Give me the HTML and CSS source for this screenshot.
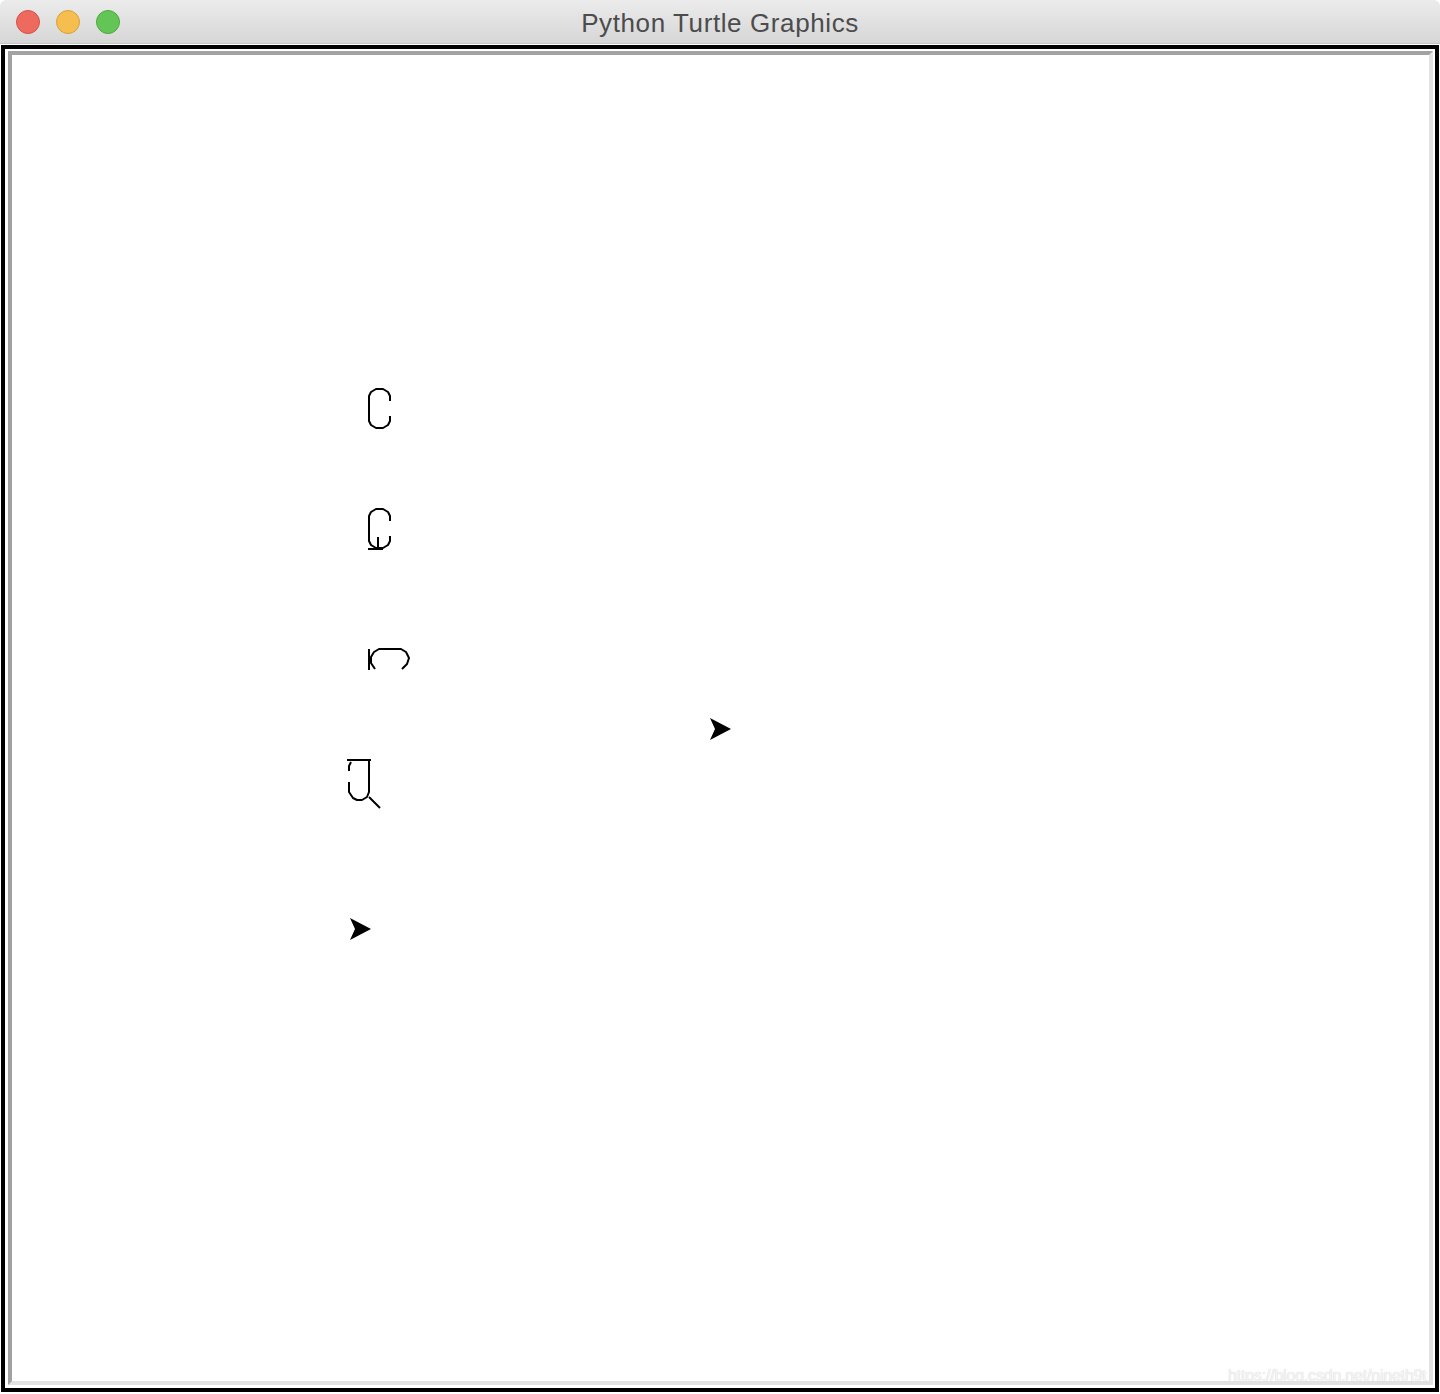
FILE: index.html
```html
<!DOCTYPE html>
<html>
<head>
<meta charset="utf-8">
<title>Python Turtle Graphics</title>
<link rel="stylesheet" href="styles.css">
</head>
<body>
<div class="window">
  <div class="titlebar">
    <div class="lights">
      <span class="light red"></span>
      <span class="light yellow"></span>
      <span class="light green"></span>
    </div>
    <div class="title">Python Turtle Graphics</div>
  </div>
  <div class="frame">
    <div class="blackbox">
      <div class="canvas">
        <svg class="drawing" viewBox="12 55 1417 1326" xmlns="http://www.w3.org/2000/svg">
          <g fill="none" stroke="#000" stroke-width="2" stroke-linejoin="round" stroke-linecap="butt">
            <polyline points="390,401 390,396 388,392 383,389 376,389 371,392 369,396 369,421 371,425 376,428 383,428 388,425 390,421 390,416"/>
            <polyline points="390,521 390,516 388,512 383,509 376,509 371,512 369,516 369,541 371,545 376,548 383,548 388,545 390,541 390,536"/>
            <polyline points="368,549 383,549"/>
            <polyline points="378,537 378,549"/>
            <polyline points="369,649 369,670"/>
            <polyline points="375,669 371,663 371,657 374,652 379,649 401,649 406,652 409,658 407,664 402,669"/>
            <polyline points="347,760 371,760"/>
            <polyline points="351,762 349,766 349,771"/>
            <polyline points="349,782 349,792 353,798 357,800 362,800 367,797 369,792 369,761"/>
            <polyline points="369,797 380,808"/>
          </g>
          <polygon points="731,729 710,718 715,729 710,740" fill="#000"/>
          <polygon points="371,929 350,918 355,929 350,940" fill="#000"/>
        </svg>
        <div class="watermark">https://blog.csdn.net/nineth9t</div>
      </div>
    </div>
  </div>
</div>
</body>
</html>
```
FILE: styles.css
```css
html, body {
  margin: 0;
  padding: 0;
  background: #ffffff;
}
.window {
  width: 1440px;
  height: 1394px;
  display: flex;
  flex-direction: column;
  overflow: hidden;
  background: #ffffff;
}
.titlebar {
  height: 44px;
  flex: none;
  display: flex;
  align-items: center;
  justify-content: center;
  position: relative;
  background: linear-gradient(#ececec, #d6d6d6);
  border-top-left-radius: 6px;
  border-top-right-radius: 6px;
  border-bottom: 1px solid #c4c4c4;
  box-sizing: border-box;
}
.lights {
  position: absolute;
  left: 16px;
  top: 10px;
  display: flex;
  gap: 16px;
}
.light {
  width: 22px;
  height: 22px;
  border-radius: 50%;
  border: 1px solid;
  box-sizing: content-box;
}
.red { background: #ee6a5f; border-color: #d25347; }
.yellow { background: #f5be4f; border-color: #d7a13f; }
.green { background: #62c555; border-color: #51a73f; }
.title {
  font-family: "Helvetica Neue", "Liberation Sans", Arial, sans-serif;
  font-size: 26px;
  color: #4c4c4c;
  letter-spacing: 0.6px;
  padding-top: 3px;
}
.frame {
  flex: 1;
  padding: 1px 1px 2px 1px;
  display: flex;
}
.blackbox {
  flex: 1;
  border: 4px solid #000;
  padding: 2px 2px 3px 3px;
  display: flex;
}
.canvas {
  flex: 1;
  position: relative;
  overflow: hidden;
  background: #ffffff;
  border-style: solid;
  border-width: 4px;
  border-color: #a2a2a2 #e2e2e2 #e2e2e2 #a2a2a2;
}
.drawing {
  display: block;
  width: 100%;
  height: 100%;
}
.watermark {
  position: absolute;
  left: 1216px;
  top: 1312px;
  white-space: nowrap;
  font-family: "Liberation Sans", Arial, sans-serif;
  font-size: 16px;
  letter-spacing: -0.2px;
  color: #f6f6f6;
  text-shadow: 0 0 1px #c4c4c4;
}
```
